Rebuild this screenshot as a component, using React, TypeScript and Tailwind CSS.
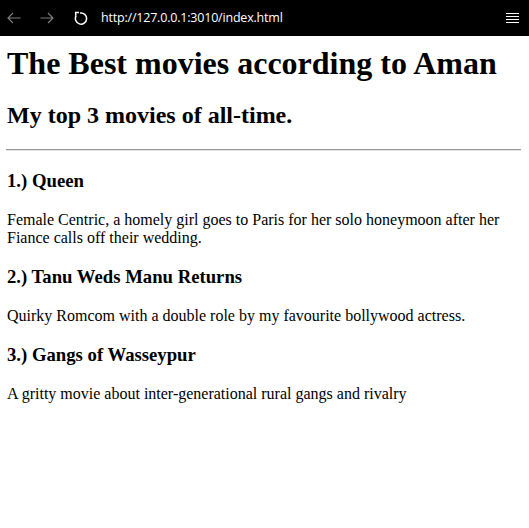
import React from 'react';

interface Movie {
  title: string;
  blurb: string;
}

const movies: Movie[] = [
  {
    title: '1.) Queen',
    blurb:
      'Female Centric, a homely girl goes to Paris for her solo honeymoon after her Fiance calls off their wedding.',
  },
  {
    title: '2.) Tanu Weds Manu Returns',
    blurb: 'Quirky Romcom with a double role by my favourite bollywood actress.',
  },
  {
    title: '3.) Gangs of Wasseypur',
    blurb: 'A gritty movie about inter-generational rural gangs and rivalry',
  },
];

function BrowserBar() {
  return (
    <div className="h-[36px] bg-black flex items-center text-white">
      {/* back */}
      <svg width="14" height="12" viewBox="0 0 14 12" className="ml-[7px]" fill="none" stroke="#7d7d7d" strokeWidth="1.2">
        <path d="M13.5 6H1M6 1L1 6l5 5" />
      </svg>
      {/* forward */}
      <svg width="14" height="12" viewBox="0 0 14 12" className="ml-[19px]" fill="none" stroke="#7d7d7d" strokeWidth="1.2">
        <path d="M0.5 6H13M8 1l5 5-5 5" />
      </svg>
      {/* refresh */}
      <svg width="14" height="14" viewBox="0 0 14 14" className="ml-[20px]" fill="none" stroke="#ffffff" strokeWidth="1.5">
        <path d="M6.03 1.99A5.6 5.6 0 1 1 2.15 4.7" />
        <path d="M5 1.4H1.7v3.3" />
      </svg>
      <span className="ml-[13px] text-[12.5px] font-['Open_Sans','Noto_Sans',sans-serif] tracking-[-0.2px]">
        http://127.0.0.1:3010/index.html
      </span>
      <div className="ml-auto mr-[10px] flex flex-col gap-[2px]">
        <span className="block w-[13px] h-px bg-white" />
        <span className="block w-[13px] h-px bg-white" />
        <span className="block w-[13px] h-px bg-white" />
        <span className="block w-[13px] h-px bg-white" />
      </div>
    </div>
  );
}

export default function App() {
  return (
    <div className="min-h-screen bg-white">
      <BrowserBar />
      <main className="pl-[7px] pr-2 pb-8 text-black font-['Liberation_Serif','Times_New_Roman',serif]">
        <h1 className="mt-[9px] text-[32px] font-bold leading-[normal]">The Best movies according to Aman</h1>
        <h2 className="mt-[20px] text-[24px] font-bold leading-[normal]">My top 3 movies of all-time.</h2>
        <hr className="mt-[20px] -ml-px border-t border-b border-t-[#9a9a9a] border-b-[#e2e2e2]" />

        {movies.map((movie) => (
          <section key={movie.title}>
            <h3 className="mt-[19px] text-[18.72px] font-bold leading-[normal]">{movie.title}</h3>
            <p className="mt-[19px] text-[16px] leading-[normal]">{movie.blurb}</p>
          </section>
        ))}
      </main>
    </div>
  );
}
